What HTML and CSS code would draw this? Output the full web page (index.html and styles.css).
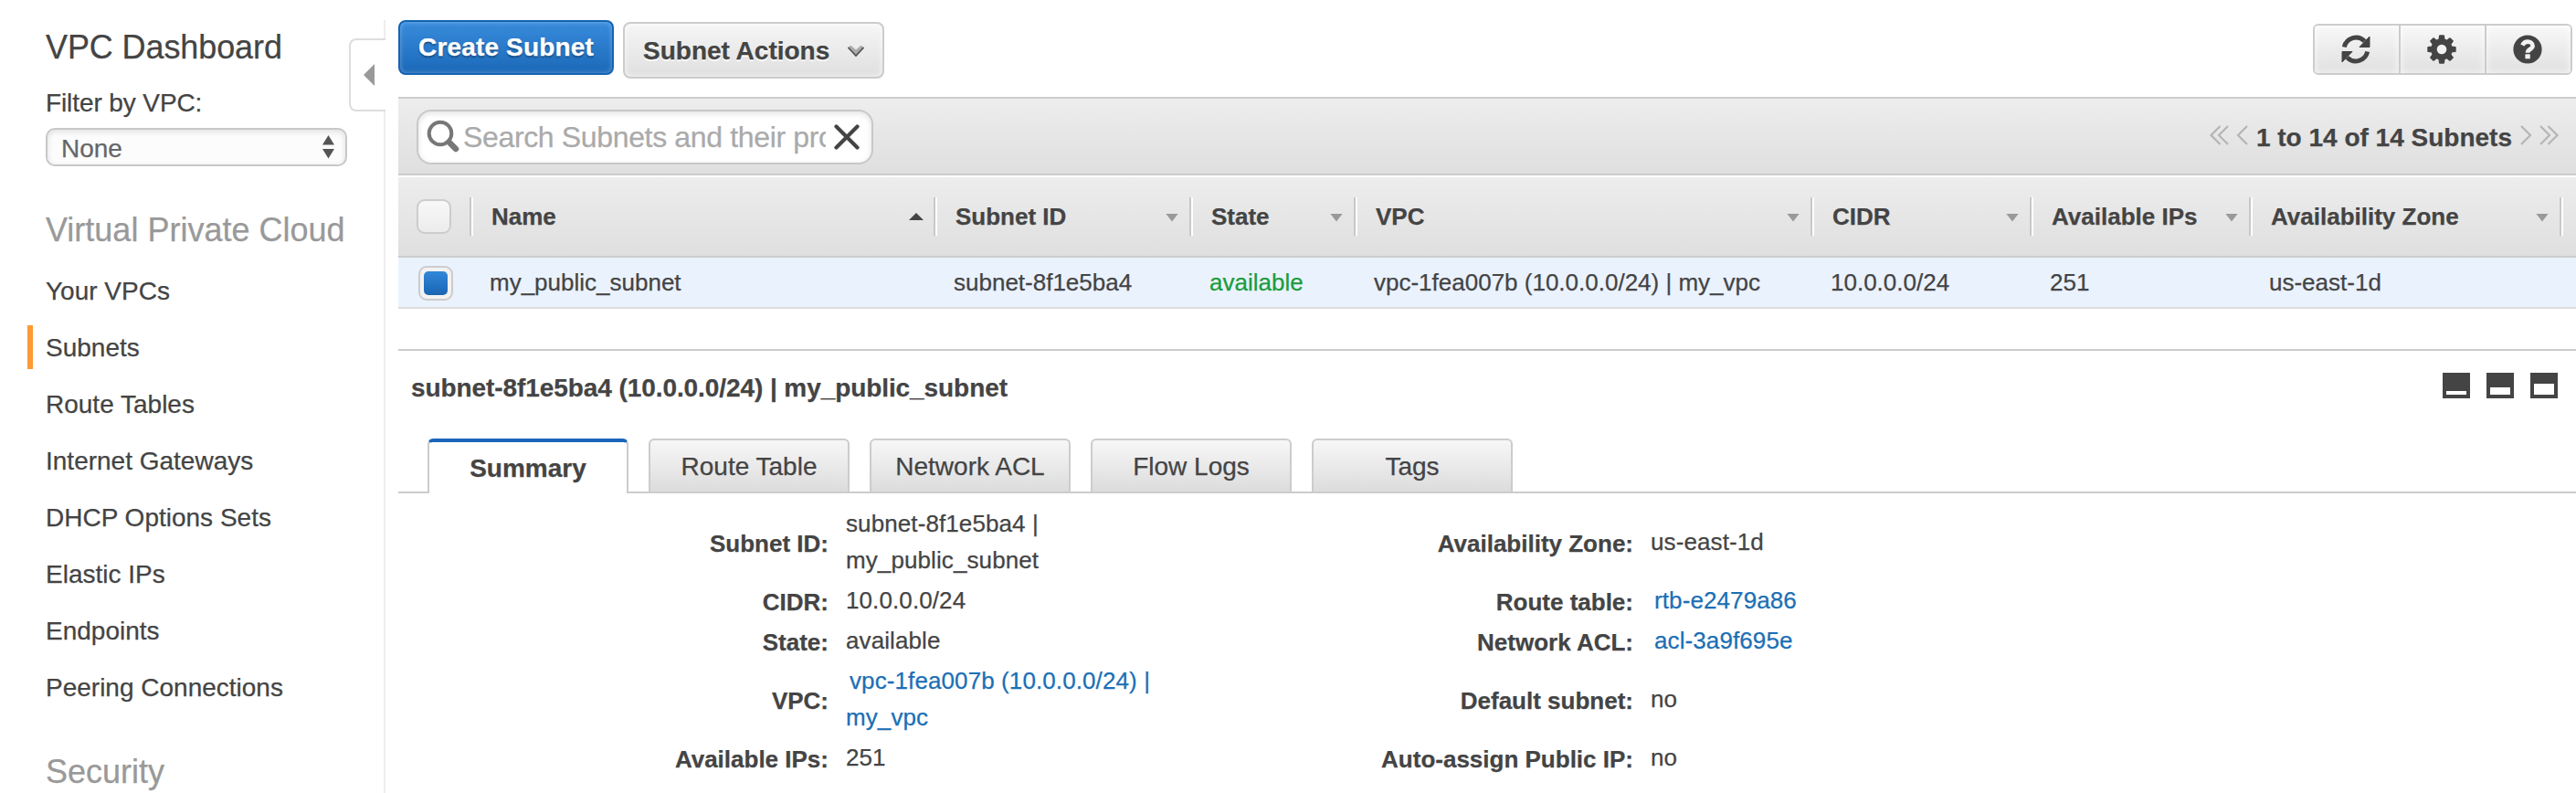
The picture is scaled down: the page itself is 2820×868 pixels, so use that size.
FILE: index.html
```html
<!DOCTYPE html>
<html lang="en">
<head>
<meta charset="utf-8">
<title>VPC Dashboard</title>
<link rel="stylesheet" href="styles.css">
</head>
<body>
<div class="app">
  <aside class="sidebar">
    <button class="collapse" aria-label="Collapse"><svg width="12" height="24" viewBox="0 0 12 24"><path d="M12 0v24L0 12z" fill="#999"/></svg></button>
    <h1 class="side-title">VPC Dashboard</h1>
    <div class="filter-label">Filter by VPC:</div>
    <div class="select"><span>None</span><svg width="13" height="26" viewBox="0 0 13 26"><path d="M6.500 0L13 10.500H0zM0 15H13L6.500 25.500z" fill="#555"/></svg></div>
    <h2 class="side-heading">Virtual Private Cloud</h2>
    <nav class="nav">
      <a class="nav-item">Your VPCs</a>
      <a class="nav-item active">Subnets</a>
      <a class="nav-item">Route Tables</a>
      <a class="nav-item">Internet Gateways</a>
      <a class="nav-item">DHCP Options Sets</a>
      <a class="nav-item">Elastic IPs</a>
      <a class="nav-item">Endpoints</a>
      <a class="nav-item">Peering Connections</a>
    </nav>
    <h2 class="side-heading security">Security</h2>
  </aside>
  <main class="main">
    <div class="toolbar">
      <button class="btn primary">Create Subnet</button>
      <button class="btn plain">Subnet Actions<svg width="20" height="14" viewBox="0 0 20 14"><path d="M1 3L4.500 .8L10 5.500L15.500 .8L19 3L10 13z" fill="#aaa"/><path d="M1.500 3L10 12L18.500 3" fill="none" stroke="#555" stroke-width="1.800"/></svg></button>
      <div class="group">
        <button class="group-btn" aria-label="Refresh"><svg width="32" height="32" viewBox="0 0 32 32"><g fill="none" stroke="#444" stroke-width="5"><path d="M3.300 13.500A13.200 13.200 0 0 1 25.500 7"/><path d="M28.700 18.500A13.200 13.200 0 0 1 6.500 25"/></g><path d="M31 2v11.500H20zM1 30V18.500H12z" fill="#444" stroke="#444" stroke-width="1" stroke-linejoin="round"/></svg></button>
        <button class="group-btn" aria-label="Settings"><svg width="32" height="32" viewBox="-16 -16 32 32"><g fill="#444"><path id="tooth" d="M-3.600-10L-3-15Q-2.800-15.700-2-15.700H2Q2.800-15.700 3-15L3.600-10V10L3 15Q2.800 15.700 2 15.700H-2Q-2.800 15.700-3 15L-3.600 10z"/><use href="#tooth" transform="rotate(45)"/><use href="#tooth" transform="rotate(90)"/><use href="#tooth" transform="rotate(135)"/><circle r="11.800"/></g><circle r="5.300" fill="#f2f2f2"/></svg></button>
        <button class="group-btn" aria-label="Help"><svg width="32" height="32" viewBox="0 0 32 32"><circle cx="16" cy="16" r="15.600" fill="#444"/><path d="M10.300 11.500C12 7.800 14 7.600 16.200 7.600C19 7.600 21.600 9.300 21.600 12.200C21.600 15.800 16 15.800 16 19.800" fill="none" stroke="#f2f2f2" stroke-width="4.600"/><rect x="13.400" y="21.300" width="5.400" height="5" fill="#f2f2f2"/></svg></button>
      </div>
    </div>
    <div class="searchbar">
      <div class="search">
        <svg class="lens" width="38" height="38" viewBox="0 0 38 38"><circle cx="16" cy="15" r="12.300" fill="none" stroke="#777" stroke-width="4"/><path d="M25.500 24.500L33 32" stroke="#777" stroke-width="6.500" stroke-linecap="round"/></svg>
        <span class="placeholder">Search Subnets and their properties</span>
        <svg width="28" height="28" viewBox="0 0 28 28"><path d="M2.500 2.500L25.500 25.500M25.500 2.500L2.500 25.500" stroke="#444" stroke-width="4.200" stroke-linecap="round"/></svg>
      </div>
      <div class="pager">
        <svg width="44" height="24" viewBox="0 0 44 24"><path d="M12.500 2L2.500 12L12.500 22M21 2L11 12L21 22M42 2L32 12L42 22" fill="none" stroke="#b5b5b5" stroke-width="2.200"/></svg>
        <span>1 to 14 of 14 Subnets</span>
        <svg width="44" height="24" viewBox="0 0 44 24"><path d="M2 2L12 12L2 22M23 2L33 12L23 22M31.500 2L41.500 12L31.500 22" fill="none" stroke="#b5b5b5" stroke-width="2.200"/></svg>
      </div>
    </div>
    <div class="grid head">
      <div class="check-cell"><span class="checkbox"></span></div>
      <div class="th">Name<i class="up"></i></div>
      <div class="th">Subnet ID<i class="down"></i></div>
      <div class="th">State<i class="down"></i></div>
      <div class="th">VPC<i class="down"></i></div>
      <div class="th">CIDR<i class="down"></i></div>
      <div class="th">Available IPs<i class="down"></i></div>
      <div class="th">Availability Zone<i class="down"></i></div>
      <div class="th"></div>
    </div>
    <div class="grid row">
      <div class="check-cell"><span class="checkbox checked"></span></div>
      <div class="td">my_public_subnet</div>
      <div class="td">subnet-8f1e5ba4</div>
      <div class="td ok">available</div>
      <div class="td">vpc-1fea007b (10.0.0.0/24) | my_vpc</div>
      <div class="td">10.0.0.0/24</div>
      <div class="td">251</div>
      <div class="td">us-east-1d</div>
    </div>
    <section class="detail">
      <div class="detail-head">
        <h3 class="detail-title">subnet-8f1e5ba4 (10.0.0.0/24) | my_public_subnet</h3>
        <div class="panes"><span class="pane low"></span><span class="pane mid"></span><span class="pane high"></span></div>
      </div>
      <div class="tabs">
        <a class="tab selected">Summary</a>
        <a class="tab">Route Table</a>
        <a class="tab">Network ACL</a>
        <a class="tab">Flow Logs</a>
        <a class="tab">Tags</a>
      </div>
      <div class="props">
        <div class="label">Subnet ID:</div><div class="value">subnet-8f1e5ba4 |<br>my_public_subnet</div>
        <div class="label">Availability Zone:</div><div class="value">us-east-1d</div>
        <div class="label">CIDR:</div><div class="value">10.0.0.0/24</div>
        <div class="label">Route table:</div><div class="value"><a class="link">rtb-e2479a86</a></div>
        <div class="label">State:</div><div class="value">available</div>
        <div class="label">Network ACL:</div><div class="value"><a class="link">acl-3a9f695e</a></div>
        <div class="label">VPC:</div><div class="value"><a class="link">vpc-1fea007b (10.0.0.0/24) |<br>my_vpc</a></div>
        <div class="label">Default subnet:</div><div class="value">no</div>
        <div class="label">Available IPs:</div><div class="value">251</div>
        <div class="label">Auto-assign Public IP:</div><div class="value">no</div>
      </div>
    </section>
  </main>
</div>
</body>
</html>
```

FILE: styles.css
```css
* { box-sizing: border-box; }
body {
  margin: 0;
  background: #fff;
  color: #444;
  font-family: "Liberation Sans", Arial, sans-serif;
  font-size: 26px;
  -webkit-text-stroke: .25px;
  overflow: hidden;
}
h1, h2, h3 { margin: 0; font-weight: normal; }
button { font: inherit; color: inherit; padding: 0; margin: 0; }
svg { display: block; flex: none; }
.app { display: flex; height: 868px; overflow: hidden; }

/* Sidebar */
.sidebar {
  position: relative;
  width: 422px;
  flex: none;
  margin-top: 22px;
  padding: 8px 0 0 50px;
  border-right: 2px solid #eee;
}
.side-title { font-size: 36px; line-height: 44px; letter-spacing: -.1px; }
.filter-label { margin-top: 23px; font-size: 28px; line-height: 32px; letter-spacing: -.1px; }
.select {
  display: flex;
  align-items: center;
  justify-content: space-between;
  width: 330px;
  height: 42px;
  margin-top: 11px;
  padding: 0 12px 0 15px;
  border: 2px solid #c8c8c8;
  border-radius: 10px;
  background: #fcfcfc;
  box-shadow: inset 0 2px 6px rgba(0, 0, 0, .12);
  color: #666;
  font-size: 28px;
  line-height: 38px;
}
.select span { padding-top: 4px; }
.side-heading { margin-top: 48px; font-size: 36px; line-height: 44px; color: #999; }
.side-heading.security { margin-top: 40px; }
.nav { margin: 13px 0 0 -20px; }
.nav-item {
  display: flex;
  align-items: center;
  height: 62px;
  padding: 2px 0 0 20px;
  font-size: 28px;
}
.nav-item.active { padding-left: 0; }
.nav-item.active::before {
  content: "";
  width: 6px;
  height: 48px;
  margin: -2px 14px 0 0;
  background: #ff9933;
}
.collapse {
  position: absolute;
  top: 20px;
  right: -2px;
  display: flex;
  align-items: center;
  width: 40px;
  height: 80px;
  padding-left: 14px;
  border: 2px solid #ddd;
  border-right: 0;
  border-radius: 8px 0 0 8px;
  background: #fff;
}

/* Toolbar */
.main { flex: 1; min-width: 0; margin-left: 14px; }
.toolbar { display: flex; align-items: flex-start; height: 106px; padding: 22px 4px 0 0; }
.btn { border-radius: 8px; font-size: 28px; font-weight: bold; line-height: 32px; white-space: nowrap; }
.btn.primary {
  width: 236px;
  height: 60px;
  padding-bottom: 1px;
  border: 2px solid #1564b4;
  background: linear-gradient(#388bdc, #1b69b9);
  box-shadow: inset 0 0 5px rgba(255, 255, 255, .35);
  color: #fff;
  letter-spacing: .15px;
  text-shadow: 0 2px 2px rgba(0, 0, 0, .35);
}
.btn.plain {
  display: flex;
  align-items: center;
  gap: 19px;
  width: 286px;
  height: 62px;
  margin: 2px 0 0 10px;
  padding: 1px 0 0 20px;
  border: 2px solid #ccc;
  background: linear-gradient(#f6f6f6, #dfdfdf);
  box-shadow: inset 0 0 6px rgba(255, 255, 255, .8);
  text-shadow: 0 2px 0 #fff;
}
.group {
  display: flex;
  height: 56px;
  width: 284px;
  margin: 4px 0 0 auto;
  border: 2px solid #ccc;
  border-radius: 6px;
  overflow: hidden;
}
.group-btn {
  display: flex;
  flex: 1;
  align-items: center;
  justify-content: center;
  padding-right: 3px;
  border: 0;
  background: linear-gradient(#f8f8f8, #e0e0e0);
  box-shadow: inset 0 0 8px rgba(255, 255, 255, .8);
}
.group-btn + .group-btn { border-left: 2px solid #ccc; }

/* Search bar */
.searchbar {
  display: flex;
  align-items: flex-start;
  justify-content: space-between;
  height: 86px;
  padding: 12px 18px 0 20px;
  border-top: 2px solid #ccc;
  border-bottom: 2px solid #ccc;
  background: linear-gradient(#ededed, #dfdfdf);
}
.search {
  display: flex;
  align-items: center;
  width: 500px;
  height: 60px;
  padding-left: 8px;
  border: 2px solid #c8c8c8;
  border-radius: 16px;
  background: #fff;
  box-shadow: inset 0 2px 6px rgba(0, 0, 0, .12);
}
.placeholder {
  width: 397px;
  margin: 0 9px 0 3px;
  overflow: hidden;
  color: #aaa;
  font-size: 32px;
  line-height: 40px;
  letter-spacing: -.35px;
  white-space: nowrap;
}
.pager { display: flex; align-items: center; gap: 8px; height: 60px; font-size: 28px; font-weight: bold; }
.pager svg { margin-top: -5px; }
.pager span { line-height: 36px; padding-top: 2px; }

/* Table */
.grid { display: grid; grid-template-columns: 78px 508px 280px 180px 500px 240px 240px 340px 18px; }
.head {
  height: 90px;
  border-top: 2px solid #fff;
  border-bottom: 2px solid #ccc;
  background: linear-gradient(#ededed, #dfdfdf);
}
.check-cell { display: flex; align-items: center; padding-left: 20px; }
.checkbox {
  width: 38px;
  height: 38px;
  border: 2px solid #ccc;
  border-radius: 9px;
  background: linear-gradient(#f8f8f8, #ececec);
}
.checkbox.checked {
  display: flex;
  margin-left: 2px;
  padding: 4px;
  background: #f2f2f2;
}
.checkbox.checked::before {
  content: "";
  flex: 1;
  border-radius: 5px;
  background: linear-gradient(#3287d9, #1965b4);
}
.th { display: flex; align-items: center; padding-right: 12px; font-weight: bold; white-space: nowrap; }
.th::before {
  content: "";
  flex: none;
  width: 4px;
  height: 42px;
  margin-right: 20px;
  background: linear-gradient(90deg, #c8c8c8 50%, #fff 50%);
}
.th:last-child { padding: 0; overflow: hidden; }
.th i { width: 14px; height: 9px; margin: 2px 0 0 auto; background: #999; clip-path: polygon(0 0, 100% 0, 50% 100%); }
.th .up { width: 16px; height: 8px; margin: 0 -1px 0 auto; background: #444; clip-path: polygon(50% 0, 100% 100%, 0 100%); }
.row { height: 56px; border-bottom: 2px solid #ddd; background: #eaf2fe; }
.td { padding-left: 22px; line-height: 55px; white-space: nowrap; }
.ok { color: #1a9c3a; }

/* Detail pane */
.detail { margin-top: 44px; border-top: 2px solid #ccc; }
.detail-head { display: flex; justify-content: space-between; height: 96px; padding: 20px 20px 0 14px; }
.detail-title { padding-top: 1px; font-size: 28px; font-weight: bold; line-height: 40px; letter-spacing: -.08px; }
.panes { display: flex; gap: 18px; padding-top: 4px; }
.pane { width: 30px; height: 28px; border: 4px solid #444; background: #fff; }
.pane.low { border-top-width: 20px; }
.pane.mid { border-top-width: 16px; }
.pane.high { border-top-width: 12px; }
.tabs { display: flex; gap: 22px; height: 60px; padding-left: 32px; border-bottom: 2px solid #ccc; }
.tab {
  width: 220px;
  height: 58px;
  border: 2px solid #ccc;
  border-bottom: 0;
  border-radius: 6px 6px 0 0;
  background: linear-gradient(#f7f7f7, #dcdcdc);
  font-size: 28px;
  line-height: 58px;
  text-align: center;
}
.tab.selected {
  height: 60px;
  border-top: 4px solid #1b66b9;
  background: #fff;
  font-weight: bold;
  line-height: 58px;
}
.props {
  display: grid;
  grid-template-columns: 471px 410px 471px 1fr;
  row-gap: 4px;
  align-items: center;
  padding-top: 13px;
  line-height: 40px;
}
.label { padding-top: 4px; text-align: right; font-weight: bold; white-space: nowrap; line-height: 36px; }
.value { padding-left: 19px; white-space: nowrap; letter-spacing: .1px; }
.link { display: block; color: #1b6fb5; text-indent: 4px; }
```
